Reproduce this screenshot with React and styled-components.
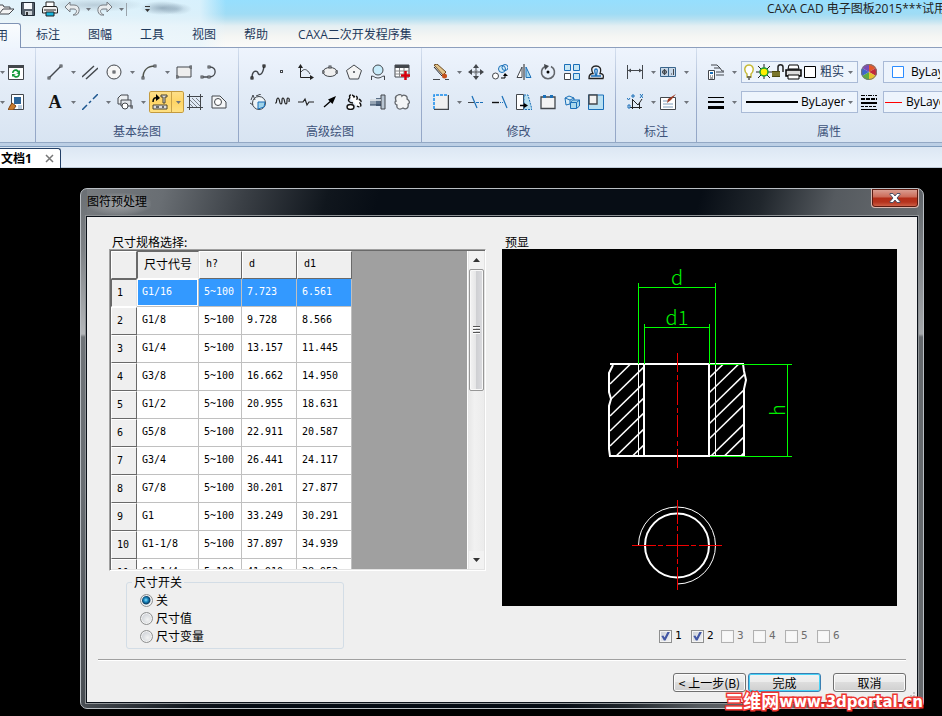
import React from "react";
import styled, { createGlobalStyle, css } from "styled-components";

const ui = `"Open Sans", "Noto Sans", "Noto Sans CJK SC", sans-serif`;
const song = `"Noto Sans CJK SC", sans-serif`;
const mono = `"DejaVu Sans Mono", "Noto Sans CJK SC", monospace`;

const GlobalStyle = createGlobalStyle`
  *, *::before, *::after { box-sizing: border-box; }
  html, body, #root { height: 100%; }
  body { margin: 0; background: #000; overflow: hidden; font: 12px/18px ${ui}; color: #1e395b; }
  button, select, input { font: inherit; color: inherit; margin: 0; padding: 0; }
  svg { display: block; flex: none; }
`;

const Window = styled.div`
  min-height: 100%;
  display: flex;
  flex-direction: column;
  overflow: hidden;
`;

/* ---------- caption and ribbon tabs ---------- */

const Header = styled.header`
  background:
    radial-gradient(ellipse 22px 7px at 162px 8px, rgba(110, 135, 155, 0.6), transparent),
    radial-gradient(ellipse 16px 6px at 176px 9px, rgba(120, 145, 165, 0.4), transparent),
    radial-gradient(ellipse 50px 7px at 95px 5px, rgba(150, 170, 185, 0.5), transparent),
    linear-gradient(90deg, rgba(240, 247, 251, 0.85) 0, rgba(232, 245, 252, 0.8) 200px, rgba(232, 245, 252, 0) 226px),
    linear-gradient(#96dffe 0, #9fdcf5 14px, #b6e0f1 19px, #e4eff3 26px, #f4f5f3 36px, #fbfbf9 47px);
  border-bottom: 1px solid #8d9fbd;
`;

const Caption = styled.div`
  height: 23px;
  display: flex;
  justify-content: space-between;
  overflow: hidden;
`;

const QuickAccess = styled.div`
  height: 18px;
  display: flex;
  align-items: center;
  gap: 6px;
`;

const QuickButton = styled.button`
  border: 0;
  background: none;
`;

const QuickDivider = styled.span`
  width: 1px;
  height: 13px;
  margin-left: -4px;
  margin-right: 11px;
  background: #9aa3ab;
`;

const AppTitle = styled.h1`
  margin: 0;
  width: 175px;
  font: 12px/18px ${ui};
  color: #222;
  white-space: nowrap;
`;

const Tabs = styled.nav`
  height: 24px;
  display: flex;
`;

const Tab = styled.button`
  border: 0;
  background: none;
  padding: 0 14px;
  color: #1e395b;
  white-space: nowrap;
  &:last-child { margin-left: 2px; }
  ${(p) => p.$active && css`
    width: 21px;
    height: 25px;
    margin-right: 1px;
    padding: 0 12px 0 0;
    display: flex;
    justify-content: flex-end;
    align-items: center;
    border: solid #7f93b5;
    border-width: 1px 1px 0 0;
    border-radius: 0 3px 0 0;
    background: linear-gradient(#fafcfe, #eef5fd);
  `}
`;

/* ---------- ribbon ---------- */

const Ribbon = styled.div`
  height: 99px;
  display: flex;
  overflow: hidden;
  background: linear-gradient(#eef4fd 0, #e3ecf7 40px, #d8e4f2 94px);
  border-bottom: 1px solid #7f9cbd;
  box-shadow: inset 0 -3px #bccfe5, inset 0 -4px #93a8c4;
`;

const Group = styled.section`
  flex: ${(p) => (p.$last ? "1 0 264px" : `0 0 ${p.$w}px`)};
  height: 94px;
  padding: 9px 0 0 ${(p) => (p.$edge ? 0 : 8)}px;
  display: flex;
  flex-direction: column;
  border-right: 1px solid;
  border-image: linear-gradient(#d5e0ef, #9aaccb 60%, #93a6c6) 1;
`;

const ToolRow = styled.div`
  height: 30px;
  display: flex;
  align-items: center;
`;

const GroupLabel = styled.h2`
  margin: 5px 0 0;
  padding-right: 8px;
  text-align: center;
  font: 12px/20px ${ui};
  color: #3d5279;
`;

const ToolButton = styled.button`
  width: ${(p) => p.$w || 24}px;
  height: 22px;
  padding-left: 3px;
  display: flex;
  align-items: center;
  gap: 8px;
  border: 0;
  background: none;
  flex: none;
  ${(p) => p.$hot && css`
    border-radius: 2px;
    box-shadow: inset 0 0 0 1px #c39a3f;
    background: linear-gradient(90deg, transparent 22px, #c9a24a 22px, #c9a24a 23px, transparent 23px),
      linear-gradient(#fde08c, #ffd566 50%, #ffe286);
  `}
`;

const Letter = styled.span`
  width: 16px;
  flex: none;
  font: bold 18px/20px "Liberation Serif", serif;
  color: #111;
  text-align: center;
`;

const Combo = styled.div`
  width: ${(p) => p.$w}px;
  height: 22px;
  padding: 0 4px 0 ${(p) => p.$pad}px;
  display: flex;
  align-items: center;
  justify-content: ${(p) => (p.$spread ? "space-between" : "flex-start")};
  gap: ${(p) => p.$gap || 0}px;
  flex: none;
  border: 1px solid #a9bad6;
  background: #edf4fc;
`;

const ComboSelect = styled.select`
  appearance: none;
  border: 0;
  background: none;
  flex: 0 0 ${(p) => p.$w}px;
  width: ${(p) => p.$w}px;
  height: 18px;
  color: ${(p) => (p.$blue ? "#1e395b" : "#000")};
`;

const DocBar = styled.div`
  height: 21px;
  padding-top: 1px;
  display: flex;
  background: linear-gradient(#dce7f3, #eaf2fb);
  border-bottom: 1px solid #bfcbd9;
`;

const DocTab = styled.div`
  width: 61px;
  height: 20px;
  padding: 0 6px 0 1px;
  display: flex;
  align-items: center;
  justify-content: space-between;
  border: solid #233f66;
  border-width: 1px 1px 0 0;
  border-radius: 0 3px 0 0;
  background: #fff;
  color: #000;
  font: bold 12px/18px ${ui};
`;

const PlainButton = styled.button`
  border: 0;
  background: none;
`;

/* ---------- dialog ---------- */

const Workspace = styled.main`
  flex: 1;
  padding: 20px 18px 7px 80px;
  background: #000;
`;

const Dialog = styled.section`
  position: relative;
  padding: 0 4px 4px;
  border: 1px solid #b9bec3;
  border-radius: 7px;
  background:
    linear-gradient(#6a6f74, #7d8185 60px, #b4b7ba 145px, transparent 148px) left / 6px 100% no-repeat,
    linear-gradient(#5d6267, #7d8185 60px, #a4a7aa 145px, transparent 148px) right / 6px 100% no-repeat,
    linear-gradient(105deg, #777b7f 0, #696e73 80px, #3a3f45 160px, #10161d 240px, #070d15 290px, #070d15 600px, #20262c 660px, #555a5f 730px, #65696d 800px);
`;

const DialogBar = styled.header`
  height: 26px;
  padding-left: 2px;
  display: flex;
  justify-content: space-between;
`;

const DialogTitle = styled.h2`
  margin: 4px 0 0;
  padding: 0 4px 0 0;
  font: 12px/18px ${ui};
  color: #000;
  background: radial-gradient(ellipse at center, rgba(190, 193, 196, 0.65), rgba(150, 153, 156, 0.35) 60%, transparent 75%);
`;

const CloseButton = styled.button`
  width: 48px;
  height: 19px;
  display: flex;
  align-items: center;
  justify-content: center;
  border: 1px solid #d9b8b0;
  border-top: 0;
  border-radius: 0 0 4px 4px;
  background: linear-gradient(#dca498, #cc6a57 8px, #b32e18 9px, #b5331d 13px, #d3694f);
  box-shadow: inset 0 0 0 1px #5b1a10;
`;

const Client = styled.div`
  position: relative;
  border: 1px solid #8e9295;
  background: #efefef;
  box-shadow: inset 0 0 0 1px #0b1119;
  padding: 15px 1px 11px;
  color: #000;
  font: 12px/18px ${song};
`;

const Columns = styled.div`
  display: flex;
  gap: 16px;
  padding: 0 20px 0 22px;
`;

const LeftColumn = styled.div`
  width: 377px;
  flex: none;
`;

const RightColumn = styled.div`
  flex: 1;
  min-width: 0;
`;

const Heading = styled.h3`
  margin: 0;
  padding: 2px 3px 0;
  height: 18px;
  font: 12px/18px ${song};
`;

const ListFrame = styled.div`
  height: 322px;
  display: flex;
  border: 1px solid;
  border-color: #a0a0a0 #fff #fff #a0a0a0;
  box-shadow: inset 1px 1px #696969, inset -1px -1px #e3e3e3;
  padding: 1px;
  background: #a0a0a0;
  background-clip: padding-box;
`;

const ListView = styled.div`
  flex: 1;
  overflow: hidden;
`;

const Specs = styled.table`
  width: 241px;
  table-layout: fixed;
  border-collapse: separate;
  border-spacing: 0;
  font: 10px/14px ${mono};
  color: #000;
`;

const HeadCell = styled.th`
  height: 28px;
  padding: 0 0 2px 6px;
  width: ${(p) => p.$w}px;
  text-align: left;
  font: ${(p) => (p.$cjk ? `12px/18px ${song}` : "inherit")};
  background: #efefef;
  border: 1px solid;
  border-color: ${(p) => (p.$sunk ? "#696969 #e3e3e3 #fff #696969" : "#fff #696969 #696969 #fff")};
`;

const RowHead = styled(HeadCell).attrs({ scope: "row" })`
  padding: 0 0 0 5px;
`;

const Cell = styled.td`
  height: 28px;
  padding: 0 0 2px 5px;
  white-space: nowrap;
  background: ${(p) => (p.$on ? "#3399ff" : "#fff")};
  color: ${(p) => (p.$on ? "#fff" : "#000")};
  border: solid #c0c0c0;
  border-width: 0 1px 1px 0;
  box-shadow: ${(p) => (p.$focus ? "inset 0 0 0 1px #fff" : "none")};
`;

const ScrollBar = styled.div`
  width: 17px;
  display: flex;
  flex-direction: column;
  align-items: center;
  border-left: 1px solid #fff;
  background: linear-gradient(90deg, #e6e6e6, #f1f1f1 40%, #ececec);
`;

const ScrollArrow = styled.button`
  width: 15px;
  height: 18px;
  display: flex;
  align-items: center;
  justify-content: center;
  border: 0;
  background: #f2f2f2;
`;

const ScrollThumb = styled.div`
  width: 15px;
  height: 122px;
  margin-bottom: auto;
  display: flex;
  align-items: center;
  justify-content: center;
  border: 1px solid #979797;
  border-radius: 2px;
  box-shadow: inset 0 0 0 1px #f8f8f8;
  background: linear-gradient(90deg, #f3f3f3 0, #e6e6e7 45%, #cfd0d3 50%, #dcdce0);
`;

const Preview = styled.svg`
  width: 100%;
  height: auto;
  background: #000;
`;

const SwitchBox = styled.fieldset`
  width: 218px;
  height: 76px;
  margin: 2px 0 0 17px;
  padding: 0 0 0 13px;
  border: 1px solid #d3dde6;
  border-radius: 3px;
`;

const Legend = styled.legend`
  margin-left: -8px;
  padding: 0 2px;
  height: 18px;
`;

const Choice = styled.label`
  height: 18px;
  display: flex;
  align-items: center;
  gap: 3px;
  color: ${(p) => (p.$off ? "#6d6d6d" : "#000")};
  font-family: ${(p) => (p.$digit ? mono : song)};
  font-size: ${(p) => (p.$digit ? 11 : 12)}px;
`;

const Radio = styled.input.attrs({ type: "radio" })`
  appearance: none;
  width: 13px;
  height: 13px;
  border: 1px solid #8e8f8f;
  border-radius: 50%;
  box-shadow: inset 0 0 0 1px #f4f4f4;
  background: radial-gradient(circle at 60% 60%, #f3f3f3, #cfd3d8 70%);
  &:checked {
    background: radial-gradient(circle at 45% 45%, #8fe0fb 0, #1b8cc4 2px, #0b3d63 4px, #e3e7ea 5px);
  }
`;

const Tick = styled.input.attrs({ type: "checkbox" })`
  appearance: none;
  width: 13px;
  height: 13px;
  border: 1px solid #8e8f8f;
  box-shadow: inset 0 0 0 1px #f4f4f4;
  background: linear-gradient(135deg, #cbd0d8, #f4f4f4);
  &:disabled { border-color: #b1b1b1; background: #f8f8f8; }
  &:checked::before {
    content: "";
    display: block;
    width: 9px;
    height: 9px;
    margin: 1px;
    background: #4257a5;
    clip-path: polygon(4% 50%, 26% 44%, 40% 68%, 74% 0, 100% 4%, 50% 100%, 32% 100%);
  }
`;

const Views = styled.div`
  margin: 21px 0 0 157px;
  display: grid;
  grid-template-columns: 32px 30px repeat(4, 32px);
`;

const Rule = styled.hr`
  margin: 10px 11px 0;
  border: 0;
  height: 2px;
  background: linear-gradient(#a0a0a0 50%, #fff 50%);
`;

const Actions = styled.footer`
  display: flex;
  justify-content: flex-end;
  gap: 2px;
  padding: 12px 11px 0;
`;

const PushButton = styled.button`
  width: 73px;
  height: 19px;
  margin-left: ${(p) => (p.$apart ? 10 : 0)}px;
  display: flex;
  align-items: center;
  justify-content: center;
  white-space: pre;
  line-height: 16px;
  border: 1px solid ${(p) => (p.$main ? "#3c7fb1" : "#707070")};
  border-radius: 3px;
  box-shadow: inset 0 0 0 1px ${(p) => (p.$main ? "#48d3f7" : "#fbfbfb")};
  background: linear-gradient(#f2f2f2, #ebebeb 50%, #dddddd 50%, #cfcfcf);
`;

const Grip = styled.svg`
  position: absolute;
  right: 3px;
  bottom: 3px;
`;

const SiteMark = styled.a`
  position: absolute;
  right: 0;
  bottom: -5px;
  display: flex;
  align-items: center;
  font: bold 15px/22px "DejaVu Sans", "Noto Sans CJK SC", sans-serif;
  color: #fff;
  text-decoration: none;
  white-space: nowrap;
  -webkit-text-stroke: 3px #ee3530;
  paint-order: stroke fill;
`;

const SiteName = styled.span`
  font-size: 18px;
`;

/* ---------- icons ---------- */

const D = "#43474c";
const B = "#1a6fb8";
const node = (x, y, c = D) => <rect x={x - 1} y={y - 1} width="2" height="2" fill="#fff" stroke={c} key={`${x}-${y}`} />;

const glyphs = {
  folder: <path d="M1 13V4h4l1 2h6v2M1 13l4-5h11l-5 5z" fill="#f4f4f4" stroke={D} />,
  save: <><path d="M1.500 1.500h13v13H3l-1.500-1.500z" fill="#56606b" stroke="#222b35" /><path d="M4 2h8v6H4z" fill="#f7f9fb" /><path d="M5 10h7v4H5z" fill="#cdd3d8" /><path d="M6 11h2v3H6z" fill="#333" /></>,
  print: <><path d="M4 1h8v5H4z" fill="#fff" stroke="#222" /><path d="M1.500 5.500h13l1 2V12h-15V7.500z" fill="#f0f0f0" stroke="#222" /><path d="M2 9h12" stroke="#222" /><path d="M4 11h8v4H4z" fill="#18b6dd" stroke="#222" /></>,
  undo: <path d="M1 6l5-5v3h4c7 0 6 9 2 10h-3c5-2 4-6 1-6H6v3z" fill="#e9ecee" stroke="#777d83" />,
  redo: <path d="M15 6l-5-5v3H6C-1 4 0 13 4 14h3C2 12 3 8 6 8h4v3z" fill="#e9ecee" stroke="#777d83" />,
  refresh: <><path d="M.5 1.500h15v14H.5z" fill="#fff" stroke={D} /><path d="M0 1h16v3H0z" fill={D} /><path d="M4 9c0-4 5-5 7-2l1-1v4H8l2-1C8 6 6 7 5.500 9zM12 10c0 4-5 5-7 2l-1 1V10h4l-2 1c2 2 4 1 4.500-1z" fill="#159a3c" /></>,
  paint: <><path d="M3.500.5h12v15h-12z" fill="#fff" stroke={D} /><path d="M6 3h7v7H6z" fill="#2b6498" /><path d="M4 9l4 3-3 4H0l2-4z" fill="#c97b2d" stroke="#7c4311" /><path d="M10 12h4M10 14h4" stroke="#7ba0c4" /></>,
  line: <><path d="M2 14L14 2" stroke={D} strokeWidth="1.400" />{node(2, 14)}{node(14, 2)}</>,
  parallel: <path d="M0 13L12 2M4 15L16 4" stroke={D} strokeWidth="1.400" />,
  circle: <><circle cx="8" cy="8" r="7" fill="#f6f6f6" stroke={D} />{node(8, 8)}</>,
  arc: <><path d="M2 14C2 6 7 2 14 2" fill="none" stroke="#50544c" strokeWidth="1.500" />{node(2, 14)}{node(14, 2)}</>,
  rect: <><path d="M1 3h14v10H1z" fill="#eee" stroke={D} />{node(1, 13)}{node(15, 3)}</>,
  poly: <><path d="M2 13h7M9 13c8 0 8-10 1-10" fill="none" stroke={D} strokeWidth="1.300" />{node(2, 13)}{node(9, 13)}{node(9, 3)}</>,
  center: <path d="M0 16L5 11M7 9l2-2M11 5l5-5" stroke="#1d568f" strokeWidth="1.500" />,
  block: <><path d="M1 4l3-3h7v9H1z" fill="#eceff2" stroke={D} /><path d="M4 6h10v6H4z" fill="#e1e5ea" stroke={D} /><circle cx="8" cy="12" r="3" fill="#fff" stroke={D} />{node(15, 13)}</>,
  library: <><path d="M1 8c0-4 2-5 5-4" fill="none" stroke="#000" strokeWidth="1.500" /><path d="M4 0l4 4-4 3z" fill="#000" /><path d="M9 1h6v2h-2v6h-2V3H9z" fill="#ddd" stroke="#4b432c" /><path d="M1 11h14v4H1z" fill="#ddd" stroke="#4b432c" /><path d="M4 13h3M10 13h2" stroke="#444" strokeWidth="1.500" /></>,
  hatch: <><path d="M2.500 0v16M13.500 0v16M0 2.500h16M0 13.500h16" stroke={D} /><path d="M3 6l7 7M3 10l3 3M5 4l8 8M9 4l4 4" stroke="#7b8087" /></>,
  region: <><path d="M1 2h8l6 6v6H1z" fill="#f4f6f8" stroke={D} /><circle cx="7" cy="8" r="3.500" fill="#fff" stroke={D} /></>,
  spline: <><path d="M2 14c0-8 5-8 6-5s5 2 6-7" fill="none" stroke={D} strokeWidth="1.500" />{node(2, 14, "#000")}{node(14, 2, "#000")}</>,
  point: <rect x="6.500" y="6.500" width="2" height="2" fill="#fff" stroke={D} />,
  curve: <><path d="M2.500 1v12.500H15" fill="none" stroke="#222" /><path d="M3 8c3-4 6-3 9 2" fill="none" stroke={D} /><path d="M0 4l2.500-4L5 4zM12 11l4 2.500-4 2.500z" fill="#222" /></>,
  ellipse: <><ellipse cx="8" cy="8" rx="7" ry="4.500" fill="#f0f0f0" stroke={D} />{node(8, 3)}{node(1, 8)}{node(15, 8)}</>,
  pentagon: <><path d="M8 1l7.500 5.500-3 8.500h-9l-3-8.500z" fill="#f4f4f4" stroke={D} /><circle cx="8" cy="8" r="1" fill={D} /></>,
  bearing: <><circle cx="8" cy="6" r="5" fill="#c8ecfb" stroke={D} /><path d="M1.500 16v-4c3 0 3 2 6.500 2s3.500-2 6.500-2v4" fill="none" stroke={D} /></>,
  sheet: <><path d="M1 1h14v12H1z" fill="#fff" stroke={D} /><path d="M1 1h14v3H1z" fill={D} /><path d="M1 7h14M1 10h14M5.500 4v9M10 4v9" stroke="#888" /><path d="M11.500 7v9M7 11.500h9" stroke="#d8000c" strokeWidth="2.500" /></>,
  pie: <><circle cx="9" cy="9" r="6.500" fill="#eef4f8" stroke={D} /><path d="M8 8h7l-1 5-6 2z" fill="#9fd3ea" stroke={B} /><path d="M1 6l2-5 2 5M0 9l3 2M6 2l5-2" fill="none" stroke={D} /></>,
  wave: <path d="M1 9h1c1 0 0-5 2-5s1 6 3 6 0-6 2-6 1 6 3 6 0-6 2-6 1 3 1 4" fill="none" stroke="#222" strokeWidth="1.200" />,
  brk: <path d="M0 8h5l2-3 2 6 2-3h5" fill="none" stroke="#222" strokeWidth="1.200" />,
  arrow: <><path d="M2 13l8-7" stroke="#000" strokeWidth="1.300" /><path d="M14 2L6 5.500l4.500 4.500z" fill="#000" /></>,
  gears: <><path d="M4 4c-2-4 3-4 4-1 2-2 4 0 3 2 4 0 5 3 3 4 2 3 0 5-3 3" fill="#fff" stroke="#111" strokeWidth="1.400" strokeDasharray="4 1" /><path d="M4 4c-3 2-1 5 3 5" fill="none" stroke="#111" strokeWidth="1.400" /><ellipse cx="4.500" cy="13" rx="3.500" ry="2.500" fill="#fff" stroke="#111" strokeWidth="1.400" /></>,
  shaft: <><path d="M0 5h6v6H0z" fill="#96a5b5" /><path d="M6 4h5v8H6z" fill="#5a6f87" /><path d="M11 1h4v14h-4z" fill="#b8c5d2" stroke={D} /><path d="M0 6h11" stroke="#edf2f6" strokeWidth="1.500" /><path d="M0 11h11" stroke="#273d57" /></>,
  cloud: <path d="M4 1c2-1 4 0 4 1 2-2 6 0 5 3 3 2 3 4 1 5 1 4-2 6-5 4-3 2-7 1-6-3-3-1-2-4-1-4-1-3-1-5 2-6z" fill="#f3f5f6" stroke="#62666b" strokeWidth="1.300" />,
  erase: <><path d="M1 1l9 10 3-3L4 0z" fill="#e2c48b" stroke="#6c4a20" /><path d="M1 3l8 9" stroke="#222" /><circle cx="11.500" cy="12" r="2.500" fill="#c4501a" /><path d="M0 15.500h16" stroke={D} strokeDasharray="7 5" /></>,
  move: <><path d="M8 0l3 4H5zM8 16l3-4H5zM0 8l4-3v6zM16 8l-4-3v6z" fill={D} /><path d="M8 4v2M8 10v2M4 8h2M10 8h2" stroke={D} />{node(8, 8)}</>,
  copy: <><circle cx="10" cy="5" r="3.500" fill="#d2ecf8" stroke={B} /><circle cx="13" cy="3.500" r="3" fill="none" stroke={B} /><circle cx="3.500" cy="12" r="3" fill="#fff" stroke={D} /><path d="M9 14h4v-3" fill="none" stroke="#000" /><path d="M11 12l2-3 3 3z" fill="#000" /></>,
  mirror: <><path d="M6 3v10.500H1z" fill="#fff" stroke={D} /><path d="M8 0v16" stroke="#222" /><path d="M10 3v10.500h5z" fill="#a7d8ee" stroke={B} /></>,
  rotate: <><path d="M5 2.500a6.500 6.500 0 1 0 6 0" fill="none" stroke="#62666b" strokeWidth="1.600" /><path d="M4 0l5 2-4 4z" fill={D} /><circle cx="8" cy="8" r="1.500" fill="#000" /></>,
  array: <><path d="M.5.5h6v6h-6zM9.500.5h6v6h-6zM9.500 9.500h6v6h-6z" fill="#c7e6f4" stroke={B} /><path d="M.5 9.500h6v6h-6z" fill="#fff" stroke={D} /></>,
  offset: <><path d="M1 14.500h14c1-3 0-5-3-5C14 4 11 2 8 2S2 4 5 9.500c-4 0-4 3-4 5z" fill="none" stroke="#222" strokeWidth="1.300" /><path d="M3 12h4.500c0-3-2-7 .5-7s.5 4 .5 7H13" fill="none" stroke={B} strokeWidth="1.300" /></>,
  stretch: <><path d="M2 2h13v13H2z" fill="#f0f0f0" /><path d="M15.500 1v14.500H1" fill="none" stroke={D} strokeWidth="1.500" /><path d="M1 15V1h14" fill="none" stroke="#188cea" strokeWidth="1.500" strokeDasharray="3 1" /></>,
  trim: <><path d="M0 8.500h6" stroke={D} /><path d="M8 8.500h8" stroke={B} strokeDasharray="3 1" /><path d="M4 2l5 12" stroke={B} strokeWidth="1.200" /></>,
  extend: <><path d="M0 8.500h7" stroke="#111" strokeWidth="1.400" /><path d="M8 8.500h4" stroke={B} strokeDasharray="1 1" /><path d="M10 2l5 12" stroke={B} strokeWidth="1.200" /></>,
  scale: <><path d="M.5.5h7v15h-7z" fill="#fff" stroke={D} /><path d="M8 1h4l4 14.500H8z" fill="#b7dff0" stroke={B} strokeDasharray="2 1" /><path d="M4 11.500h5" stroke="#000" strokeWidth="1.500" /><path d="M8 9l4 2.500L8 14z" fill="#000" /></>,
  breakAt: <><path d="M3 3H1v11.500h14V3h-2M5 3h6" fill="#f3f3f3" stroke={D} strokeWidth="1.300" /><path d="M3 1h3v3H3zM10 1h3v3h-3z" fill={B} /></>,
  explode: <><path d="M1 4l4-2 5 2v3l-4 3-4 1z" fill="#d9edf7" stroke={B} /><path d="M1 4l5 2v4M6 6l4-2" stroke={B} /><path d="M6.500 8.500h6v6h-6zM6.500 8.500l2-2.500h7v6l-3 2.500M12.500 8.500l3-2.500" fill="#a9d8ec" stroke={B} /></>,
  chamfer: <><path d="M.5 1h15v14.500H.5z" fill="#b9e0f2" stroke={B} /><path d="M1 1h8v9H1z" fill="#f1f1f1" stroke={D} strokeWidth="1.400" /></>,
  dim: <><path d="M.5 1v14M15.500 1v14M1 6.500h14" stroke={D} fill="none" /><path d="M1 6.500l3-2v4zM15 6.500l-3-2v4z" fill={D} /></>,
  tol: <><path d="M.5 3.500h15v9H.5z" fill="#c8d8e8" stroke="#39658c" /><path d="M8.500 4v8" stroke="#39658c" /><circle cx="4.500" cy="8" r="2" fill="none" stroke={D} /><path d="M2 8h5M4.500 5v6M11 10h1M13.500 5v6" stroke={D} /></>,
  coord: <><path d="M5.500 5v10M3 13.500h12M6 6l5 5 4-6M12.500 15V9" fill="none" stroke="#222" /><path d="M0 4l1.500 2L3 4M5 1v2h2V1zM13 0l3 4M16 0l-3 4M1 11h2v3H1z" fill="none" stroke={B} /></>,
  annotate: <><path d="M.5 3.500h15v12H.5z" fill="#fff" stroke={D} /><path d="M3 7h5M3 10h10M3 13h10" stroke="#7f9dbb" /><path d="M16 0l-5 6-4 3 1-4z" fill="#9c3820" /></>,
  layers: <><path d="M3 1h6l3 3M6 4h6l2 3h2M8 8h8M8 11h8" fill="none" stroke={D} /><path d="M.5 6.500h6v9h-6z" fill="#fff" stroke={D} /><path d="M2 8h3v2H2z" fill={B} /><path d="M2 12h1M4 12h1M2 14h3" stroke={D} /></>,
  weights: <><path d="M0 3.500h16" stroke="#000" /><path d="M0 8h16" stroke="#000" strokeWidth="2" /><path d="M0 13.500h16" stroke="#000" strokeWidth="3" /></>,
  wheel: <><path d="M8 8V0a8 8 0 0 1 7 4z" fill="#e3572b" /><path d="M8 8l7-4a8 8 0 0 1 0 8z" fill="#c12a3a" /><path d="M8 8l7 4a8 8 0 0 1-7 4z" fill="#e8c22d" /><path d="M8 8v8a8 8 0 0 1-7-4z" fill="#5fae3f" /><path d="M8 8l-7 4a8 8 0 0 1 0-8z" fill="#3f66c9" /><path d="M8 8L1 4a8 8 0 0 1 7-4z" fill="#7b4bb5" /><circle cx="8" cy="8" r="7.500" fill="none" stroke="#777" /></>,
  styles: <><path d="M0 1.500h16" stroke="#000" strokeDasharray="4 1 1 1" /><path d="M0 5h16" stroke="#000" strokeWidth="2" strokeDasharray="4 1" /><path d="M0 9h16" stroke="#000" strokeWidth="2" /><path d="M0 12.500h16" stroke="#000" strokeDasharray="3 1" /><path d="M0 15.500h16" stroke="#000" /></>,
};

function Icon({ name, crop }) {
  return (
    <svg width={crop ? 14 : 16} height="16" viewBox={crop ? "2 0 14 16" : "0 0 16 16"} fill="none" aria-hidden="true">
      {glyphs[name]}
    </svg>
  );
}

const Caret = () => (
  <svg width="5" height="3" viewBox="0 0 5 3" aria-hidden="true"><path d="M0 0h5L2.500 3z" fill="#6f747b" /></svg>
);

function Tool({ name, drop, hot, w }) {
  return (
    <ToolButton type="button" aria-label={name} $w={w || (drop ? 35 : 24)} $hot={hot}>
      <Icon name={name} />
      {drop && <Caret />}
    </ToolButton>
  );
}

/* entries ending in "+" carry a drop-down arrow, "!" marks the active tool */
function Tools({ list, w }) {
  return list.split(" ").map((t) => (
    <Tool key={t} name={t.replace(/[+!]/g, "")} drop={t.includes("+")} hot={t.includes("!")} w={w} />
  ));
}

const LayerState = () => (
  <svg width="72" height="18" viewBox="0 0 72 18" fill="none" aria-hidden="true">
    <path d="M3 11C-1 7 1 2 5 2s6 5 2 9v3H3z" fill="#fff" stroke="#c7bb3b" strokeWidth="1.500" /><path d="M3 14h4M4 16h2" stroke="#555" strokeWidth="1.500" />
    <path d="M20 1v15M12 9h16M14 3l12 12M26 3L14 15" stroke="#222" /><circle cx="20" cy="9" r="4" fill="#ffef00" stroke="#1e9c2c" strokeWidth="1.500" />
    <path d="M34 8V4c0-3 5-3 5 0v5" stroke="#222" strokeWidth="1.500" /><path d="M28 8h8v6h-8z" fill="#4c4a10" /><path d="M28 10h8M28 12h8" stroke="#aaa44a" />
    <path d="M45 2h9l1 4H44z" fill="#fff" stroke="#000" /><path d="M42 7h15v6H42z" fill="#ddd" stroke="#000" strokeWidth="1.500" /><path d="M44 12h11v4H44z" fill="#fff" stroke="#000" />
    <path d="M60.500 3.500h11v11h-11z" fill="#fff" stroke="#000" />
  </svg>
);

/* ---------- drawing preview ---------- */

function Drawing() {
  const leftHatch = [135, 151, 167, 182, 197, 213, 229];
  const rightHatch = [129, 144, 160, 175, 190, 209, 222, 238];
  return (
    <Preview viewBox="0 0 395 357" fill="none" role="img" aria-label="预显">
      <defs>
        <clipPath id="cutL"><path d="M108 116H142V206H108z" /></clipPath>
        <clipPath id="cutR"><path d="M208 116H242V206H208z" /></clipPath>
      </defs>
      <g stroke="#fff" strokeWidth="1.500">
        <g clipPath="url(#cutL)">{leftHatch.map((y) => <path key={y} d={`M108 ${y}l40-39`} />)}</g>
        <g clipPath="url(#cutR)">{rightHatch.map((y) => <path key={y} d={`M207 ${y}l40-39`} />)}</g>
      </g>
      <g stroke="#fff" strokeWidth="2">
        <path d="M108 115H242M107 207H243M142 115V207M207 115V207" />
        <path d="M111 116L107 124V143L109 150L107 157V200L108 207M241 115L242 122L244 131L242 140V207" />
        <circle cx="175" cy="296.500" r="32" />
      </g>
      <path d="M136.500 115V206M213.500 115V206M136.500 296.500A38.500 38.500 0 1 1 175.500 335" stroke="#fff" />
      <g stroke="#f00000">
        <path d="M175.500 104V219" strokeDasharray="19 3 5 2 23 3 5 2 22 4 5 3 19" />
        <path d="M130 296.500H220M175.500 251V341" strokeDasharray="24 2 5 3 23 2 5 3 23" />
      </g>
      <path
        d="M136.500 34V115M213.500 34V115M137 38.500H213M142.500 75V115M207.500 75V115M143 78.500H207M208 115.500H290M208 207.500H290M285.500 116V207"
        stroke="#0f0"
      />
      <g fill="#00f000" fontFamily='"Noto Sans CJK SC", sans-serif' fontWeight="300" fontSize="20" textAnchor="middle">
        <text x="175" y="36">d</text>
        <text x="175" y="76">d1</text>
        <text transform="translate(283 161) rotate(-90)">h</text>
      </g>
    </Preview>
  );
}

const rows = [
  ["G1/16", "7.723", "6.561"],
  ["G1/8", "9.728", "8.566"],
  ["G1/4", "13.157", "11.445"],
  ["G3/8", "16.662", "14.950"],
  ["G1/2", "20.955", "18.631"],
  ["G5/8", "22.911", "20.587"],
  ["G3/4", "26.441", "24.117"],
  ["G7/8", "30.201", "27.877"],
  ["G1", "33.249", "30.291"],
  ["G1-1/8", "37.897", "34.939"],
  ["G1-1/4", "41.910", "38.952"],
];

function SpecTable() {
  return (
    <Specs>
      <thead>
        <tr>
          <HeadCell $w={26} />
          <HeadCell $w={62} $cjk $sunk>尺寸代号</HeadCell>
          <HeadCell $w={43}>h?</HeadCell>
          <HeadCell $w={55}>d</HeadCell>
          <HeadCell $w={55}>d1</HeadCell>
        </tr>
      </thead>
      <tbody>
        {rows.map(([code, d, d1], i) => (
          <tr key={code}>
            <RowHead $sunk={i === 0}>{i + 1}</RowHead>
            <Cell $on={i === 0} $focus={i === 0}>{code}</Cell>
            <Cell $on={i === 0}>5~100</Cell>
            <Cell $on={i === 0}>{d}</Cell>
            <Cell $on={i === 0}>{d1}</Cell>
          </tr>
        ))}
      </tbody>
    </Specs>
  );
}

export default function App() {
  return (
    <Window>
      <GlobalStyle />
      <Header>
        <Caption>
          <QuickAccess>
            <QuickButton aria-label="open"><Icon name="folder" crop /></QuickButton>
            <QuickButton aria-label="save"><Icon name="save" /></QuickButton>
            <QuickButton aria-label="print"><Icon name="print" /></QuickButton>
            <QuickButton aria-label="undo"><Icon name="undo" /></QuickButton>
            <Caret />
            <QuickButton aria-label="redo"><Icon name="redo" /></QuickButton>
            <Caret />
            <QuickDivider />
            <QuickButton aria-label="customize">
              <svg width="7" height="7" viewBox="0 0 7 7"><path d="M1 .5h5" stroke="#333" /><path d="M1 3h5L3.500 6z" fill="#333" /></svg>
            </QuickButton>
          </QuickAccess>
          <AppTitle>CAXA CAD 电子图板2015***试用</AppTitle>
        </Caption>
        <Tabs>
          <Tab $active>用</Tab>
          {["标注", "图幅", "工具", "视图", "帮助", "CAXA二次开发程序集"].map((t) => <Tab key={t}>{t}</Tab>)}
        </Tabs>
      </Header>

      <Ribbon>
        <Group $w={36} $edge>
          <ToolRow><Caret /><Tool name="refresh" /></ToolRow>
          <ToolRow><Caret /><Tool name="paint" /></ToolRow>
        </Group>
        <Group $w={203}>
          <ToolRow><Tools list="line+ parallel circle+ arc+ rect poly" /></ToolRow>
          <ToolRow>
            <ToolButton type="button" $w={35}><Letter>A</Letter><Caret /></ToolButton>
            <Tools list="center+ block+ library+! hatch region" />
          </ToolRow>
          <GroupLabel>基本绘图</GroupLabel>
        </Group>
        <Group $w={183}>
          <ToolRow><Tools list="spline point curve ellipse pentagon bearing sheet" /></ToolRow>
          <ToolRow><Tools list="pie wave brk arrow gears shaft cloud" /></ToolRow>
          <GroupLabel>高级绘图</GroupLabel>
        </Group>
        <Group $w={194}>
          <ToolRow><Tools list="erase+ move copy mirror rotate array offset" /></ToolRow>
          <ToolRow><Tools list="stretch+ trim extend scale breakAt explode chamfer" /></ToolRow>
          <GroupLabel>修改</GroupLabel>
        </Group>
        <Group $w={81}>
          <ToolRow><Tools list="dim+ tol+" w={33} /></ToolRow>
          <ToolRow><Tools list="coord+ annotate+" w={33} /></ToolRow>
          <GroupLabel>标注</GroupLabel>
        </Group>
        <Group $last>
          <ToolRow>
            <Tool name="layers" drop w={36} />
            <Combo $w={117} $pad={2} $spread>
              <LayerState />
              <ComboSelect $w={24} $blue aria-label="图层"><option>粗实</option></ComboSelect>
              <Caret />
            </Combo>
            <Tool name="wheel" w={25} />
            <Combo $w={78} $pad={8} $gap={7}>
              <svg width="12" height="12" viewBox="0 0 12 12"><path d="M.5.5h11v11H.5z" fill="#fff" stroke="#2b8cff" /></svg>
              <ComboSelect $w={29} aria-label="颜色"><option>ByLayer</option></ComboSelect>
            </Combo>
          </ToolRow>
          <ToolRow>
            <Tool name="weights" drop w={36} />
            <Combo $w={117} $pad={4} $spread>
              <svg width="52" height="2" viewBox="0 0 52 2"><path d="M0 1h52" stroke="#000" strokeWidth="2" /></svg>
              <ComboSelect $w={44} aria-label="线型"><option>ByLayer</option></ComboSelect>
              <Caret />
            </Combo>
            <Tool name="styles" w={25} />
            <Combo $w={78} $pad={1} $gap={4}>
              <svg width="17" height="1" viewBox="0 0 17 1"><path d="M0 .5h17" stroke="#f00" /></svg>
              <ComboSelect $w={34} aria-label="线宽"><option>ByLayer</option></ComboSelect>
            </Combo>
          </ToolRow>
          <GroupLabel>属性</GroupLabel>
        </Group>
      </Ribbon>

      <DocBar>
        <DocTab>
          文档1
          <PlainButton aria-label="关闭文档">
            <svg width="9" height="9" viewBox="0 0 9 9"><path d="M1 1l7 7M8 1L1 8" stroke="#777" strokeWidth="1.500" /></svg>
          </PlainButton>
        </DocTab>
      </DocBar>

      <Workspace>
        <Dialog role="dialog" aria-label="图符预处理">
          <DialogBar>
            <DialogTitle>图符预处理</DialogTitle>
            <CloseButton aria-label="关闭">
              <svg width="12" height="10" viewBox="0 0 12 10"><path d="M1 .5h3l2 2.500L8 .5h3v1L8 5l3 3.500v1H8L6 7 4 9.500H1v-1L4 5 1 1.500z" fill="#fff" stroke="#4c5064" /></svg>
            </CloseButton>
          </DialogBar>
          <Client>
            <Columns>
              <LeftColumn>
                <Heading>尺寸规格选择:</Heading>
                <ListFrame>
                  <ListView><SpecTable /></ListView>
                  <ScrollBar>
                    <ScrollArrow aria-label="向上"><svg width="7" height="4" viewBox="0 0 7 4"><path d="M0 4h7L3.500 0z" fill="#333" /></svg></ScrollArrow>
                    <ScrollThumb>
                      <svg width="7" height="9" viewBox="0 0 7 9"><path d="M0 .5h7M0 3.500h7M0 6.500h7" stroke="#555" /><path d="M0 1.500h7M0 4.500h7M0 7.500h7" stroke="#fff" /></svg>
                    </ScrollThumb>
                    <ScrollArrow aria-label="向下"><svg width="7" height="4" viewBox="0 0 7 4"><path d="M0 0h7L3.500 4z" fill="#333" /></svg></ScrollArrow>
                  </ScrollBar>
                </ListFrame>
                <SwitchBox>
                  <Legend>尺寸开关</Legend>
                  {["关", "尺寸值", "尺寸变量"].map((t, i) => (
                    <Choice key={t}><Radio name="size" defaultChecked={i === 0} />{t}</Choice>
                  ))}
                </SwitchBox>
              </LeftColumn>
              <RightColumn>
                <Heading>预显</Heading>
                <Drawing />
                <Views>
                  {[1, 2, 3, 4, 5, 6].map((n) => (
                    <Choice key={n} $digit $off={n > 2}><Tick defaultChecked={n < 3} disabled={n > 2} />{n}</Choice>
                  ))}
                </Views>
              </RightColumn>
            </Columns>
            <Rule />
            <Actions>
              <PushButton type="button">{"< 上一步(B)"}</PushButton>
              <PushButton type="button" $main>完成</PushButton>
              <PushButton type="button" $apart>取消</PushButton>
            </Actions>
            <Grip width="8" height="8" viewBox="0 0 8 8"><path d="M6 0h2v2H6zM3 3h2v2H3zM6 3h2v2H6zM0 6h2v2H0zM3 6h2v2H3zM6 6h2v2H6z" fill="#c4c4c4" /></Grip>
          </Client>
          <SiteMark href="#site"><SiteName>三维网</SiteName>www.3dportal.cn</SiteMark>
        </Dialog>
      </Workspace>
    </Window>
  );
}
